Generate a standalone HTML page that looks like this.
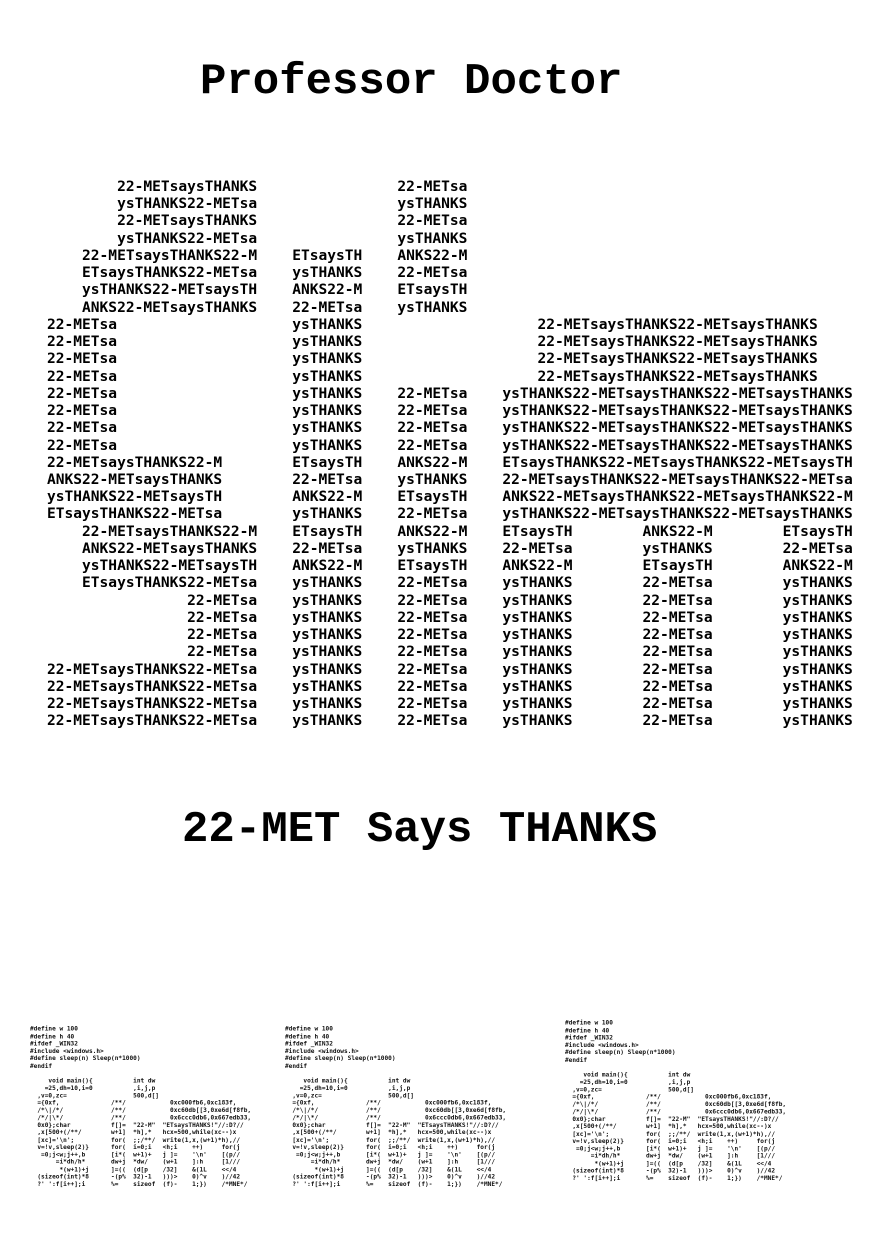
<!DOCTYPE html>
<html><head><meta charset="utf-8">
<style>
html,body{margin:0;padding:0;background:#fff;}
body{width:877px;height:1240px;position:relative;overflow:hidden;font-family:"Liberation Mono",monospace;color:#000;}
.t{position:absolute;font-weight:bold;font-size:44px;line-height:44px;white-space:pre;margin:0;}
#grid{position:absolute;left:47px;top:178px;font-weight:bold;font-size:14.55px;line-height:17.23px;white-space:pre;margin:0;}
.code{position:absolute;font-weight:bold;font-size:12px;line-height:14.5px;white-space:pre;margin:0;transform:scale(0.51);transform-origin:0 0;color:#111;}
</style></head><body>
<div class="t" style="left:200px;top:60px;">Professor Doctor</div>
<pre id="grid">        22-METsaysTHANKS                22-METsa
        ysTHANKS22-METsa                ysTHANKS
        22-METsaysTHANKS                22-METsa
        ysTHANKS22-METsa                ysTHANKS
    22-METsaysTHANKS22-M    ETsaysTH    ANKS22-M
    ETsaysTHANKS22-METsa    ysTHANKS    22-METsa
    ysTHANKS22-METsaysTH    ANKS22-M    ETsaysTH
    ANKS22-METsaysTHANKS    22-METsa    ysTHANKS
22-METsa                    ysTHANKS                    22-METsaysTHANKS22-METsaysTHANKS
22-METsa                    ysTHANKS                    22-METsaysTHANKS22-METsaysTHANKS
22-METsa                    ysTHANKS                    22-METsaysTHANKS22-METsaysTHANKS
22-METsa                    ysTHANKS                    22-METsaysTHANKS22-METsaysTHANKS
22-METsa                    ysTHANKS    22-METsa    ysTHANKS22-METsaysTHANKS22-METsaysTHANKS
22-METsa                    ysTHANKS    22-METsa    ysTHANKS22-METsaysTHANKS22-METsaysTHANKS
22-METsa                    ysTHANKS    22-METsa    ysTHANKS22-METsaysTHANKS22-METsaysTHANKS
22-METsa                    ysTHANKS    22-METsa    ysTHANKS22-METsaysTHANKS22-METsaysTHANKS
22-METsaysTHANKS22-M        ETsaysTH    ANKS22-M    ETsaysTHANKS22-METsaysTHANKS22-METsaysTH
ANKS22-METsaysTHANKS        22-METsa    ysTHANKS    22-METsaysTHANKS22-METsaysTHANKS22-METsa
ysTHANKS22-METsaysTH        ANKS22-M    ETsaysTH    ANKS22-METsaysTHANKS22-METsaysTHANKS22-M
ETsaysTHANKS22-METsa        ysTHANKS    22-METsa    ysTHANKS22-METsaysTHANKS22-METsaysTHANKS
    22-METsaysTHANKS22-M    ETsaysTH    ANKS22-M    ETsaysTH        ANKS22-M        ETsaysTH
    ANKS22-METsaysTHANKS    22-METsa    ysTHANKS    22-METsa        ysTHANKS        22-METsa
    ysTHANKS22-METsaysTH    ANKS22-M    ETsaysTH    ANKS22-M        ETsaysTH        ANKS22-M
    ETsaysTHANKS22-METsa    ysTHANKS    22-METsa    ysTHANKS        22-METsa        ysTHANKS
                22-METsa    ysTHANKS    22-METsa    ysTHANKS        22-METsa        ysTHANKS
                22-METsa    ysTHANKS    22-METsa    ysTHANKS        22-METsa        ysTHANKS
                22-METsa    ysTHANKS    22-METsa    ysTHANKS        22-METsa        ysTHANKS
                22-METsa    ysTHANKS    22-METsa    ysTHANKS        22-METsa        ysTHANKS
22-METsaysTHANKS22-METsa    ysTHANKS    22-METsa    ysTHANKS        22-METsa        ysTHANKS
22-METsaysTHANKS22-METsa    ysTHANKS    22-METsa    ysTHANKS        22-METsa        ysTHANKS
22-METsaysTHANKS22-METsa    ysTHANKS    22-METsa    ysTHANKS        22-METsa        ysTHANKS
22-METsaysTHANKS22-METsa    ysTHANKS    22-METsa    ysTHANKS        22-METsa        ysTHANKS</pre>
<div class="t" style="left:182px;top:808px;">22-MET Says THANKS</div>
<pre class="code" style="left:30px;top:1025px;">#define w 100
#define h 40
#ifdef _WIN32
#include &lt;windows.h&gt;
#define sleep(n) Sleep(n*1000)
#endif

     void main(){           int dw
    =25,dh=10,i=0           ,i,j,p
  ,v=0,zc=                  500,d[]
  ={0xf,              /**/            0xc000fb6,0xc183f,
  /*\|/*/             /**/            0xc60db[[3,0xe6d[f8fb,
  /*/|\*/             /**/            0x6ccc0db6,0x667edb33,
  0x0};char           f[]=  "22-M"  "ETsaysTHANKS!"//:D?//
  ,x[500+(/**/        w+1]  *h],*   hcx=500,while(xc--)x
  [xc]='\n';          for(  ;;/**/  write(1,x,(w+1)*h),//
  v=!v,sleep(2)}      for(  i=0;i   &lt;h;i    ++)     for(j
   =0;j&lt;w;j++,b       [i*(  w+1)+   j ]=    '\n'    [(p//
       =i*dh/h*       dw+j  *dw/    (w+1    ]:h     [1///
        *(w+1)+j      ]=((  (d[p    /32]    &amp;(1L    &lt;&lt;/4
  (sizeof(int)*8      -(p%  32)-1   )))&gt;    0)^v    )//42
  ?' ':f[i++];i       %=    sizeof  (f)-    1;})    /*MNE*/</pre>
<pre class="code" style="left:285px;top:1025px;">#define w 100
#define h 40
#ifdef _WIN32
#include &lt;windows.h&gt;
#define sleep(n) Sleep(n*1000)
#endif

     void main(){           int dw
    =25,dh=10,i=0           ,i,j,p
  ,v=0,zc=                  500,d[]
  ={0xf,              /**/            0xc000fb6,0xc183f,
  /*\|/*/             /**/            0xc60db[[3,0xe6d[f8fb,
  /*/|\*/             /**/            0x6ccc0db6,0x667edb33,
  0x0};char           f[]=  "22-M"  "ETsaysTHANKS!"//:D?//
  ,x[500+(/**/        w+1]  *h],*   hcx=500,while(xc--)x
  [xc]='\n';          for(  ;;/**/  write(1,x,(w+1)*h),//
  v=!v,sleep(2)}      for(  i=0;i   &lt;h;i    ++)     for(j
   =0;j&lt;w;j++,b       [i*(  w+1)+   j ]=    '\n'    [(p//
       =i*dh/h*       dw+j  *dw/    (w+1    ]:h     [1///
        *(w+1)+j      ]=((  (d[p    /32]    &amp;(1L    &lt;&lt;/4
  (sizeof(int)*8      -(p%  32)-1   )))&gt;    0)^v    )//42
  ?' ':f[i++];i       %=    sizeof  (f)-    1;})    /*MNE*/</pre>
<pre class="code" style="left:565px;top:1019px;">#define w 100
#define h 40
#ifdef _WIN32
#include &lt;windows.h&gt;
#define sleep(n) Sleep(n*1000)
#endif

     void main(){           int dw
    =25,dh=10,i=0           ,i,j,p
  ,v=0,zc=                  500,d[]
  ={0xf,              /**/            0xc000fb6,0xc183f,
  /*\|/*/             /**/            0xc60db[[3,0xe6d[f8fb,
  /*/|\*/             /**/            0x6ccc0db6,0x667edb33,
  0x0};char           f[]=  "22-M"  "ETsaysTHANKS!"//:D?//
  ,x[500+(/**/        w+1]  *h],*   hcx=500,while(xc--)x
  [xc]='\n';          for(  ;;/**/  write(1,x,(w+1)*h),//
  v=!v,sleep(2)}      for(  i=0;i   &lt;h;i    ++)     for(j
   =0;j&lt;w;j++,b       [i*(  w+1)+   j ]=    '\n'    [(p//
       =i*dh/h*       dw+j  *dw/    (w+1    ]:h     [1///
        *(w+1)+j      ]=((  (d[p    /32]    &amp;(1L    &lt;&lt;/4
  (sizeof(int)*8      -(p%  32)-1   )))&gt;    0)^v    )//42
  ?' ':f[i++];i       %=    sizeof  (f)-    1;})    /*MNE*/</pre>
</body></html>
